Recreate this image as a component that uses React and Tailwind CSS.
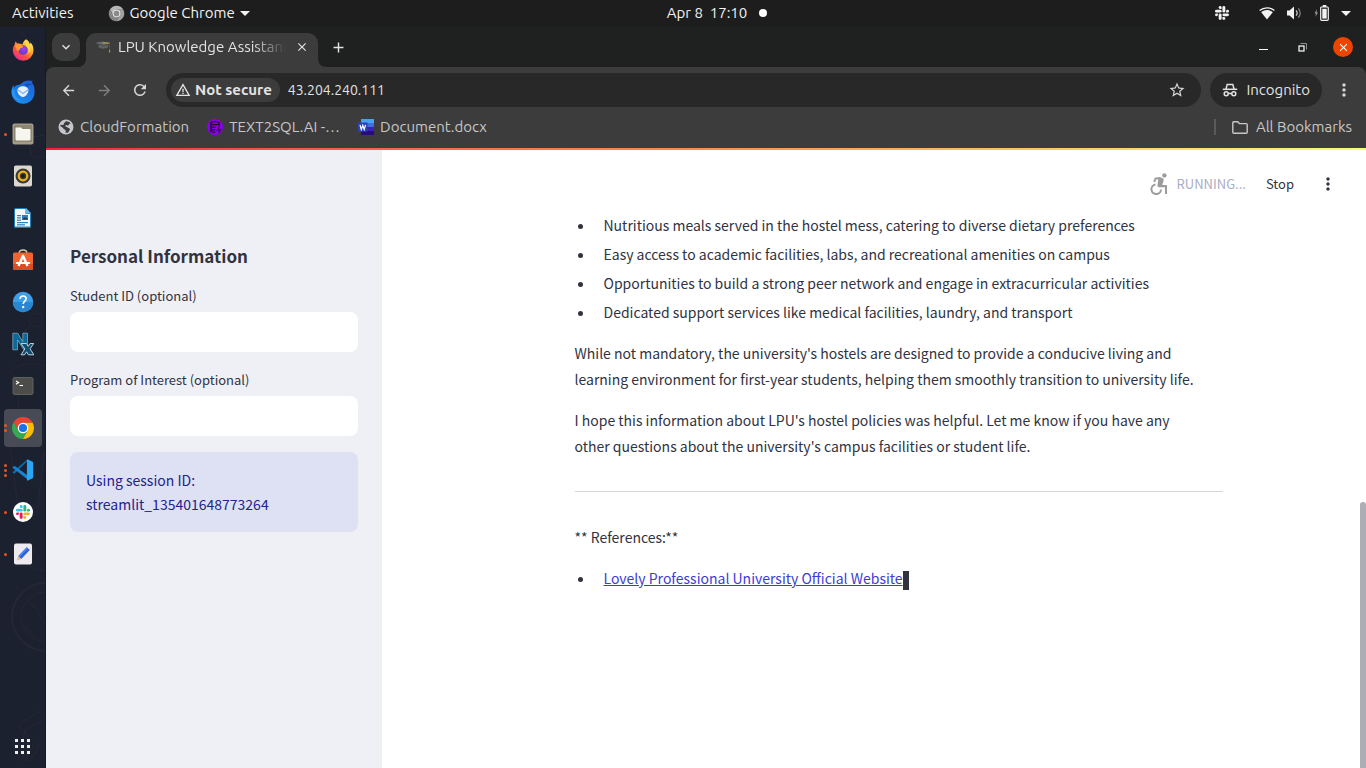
import React from "react";
import {
  MdArrowBack,
  MdArrowForward,
  MdRefresh,
  MdStarBorder,
  MdMoreVert,
  MdClose,
  MdAdd,
  MdKeyboardArrowDown,
  MdWarningAmber,
} from "react-icons/md";

const UI = "font-['Ubuntu','Noto_Sans',sans-serif]";
const BODY = "font-['Source_Sans_Pro','Noto_Sans_CJK_SC',sans-serif]";

/* ---------- icons ---------- */

function ChromeIcon({ size, gray }) {
  const [r, y, g, b, ring] = gray
    ? ["#b5b5b5", "#a0a0a0", "#878787", "#8a8a8a", "#f5f5f5"]
    : ["#ea4335", "#fbbc05", "#34a853", "#1a73e8", "#ffffff"];
  return (
    <svg width={size} height={size} viewBox="0 0 48 48" aria-hidden="true">
      <path fill={r} d="M24 13.5H43.33A22 22 0 0 0 5.25 12.51L14.91 29.25L24 24Z" />
      <path fill={y} d="M33.09 29.25L23.43 45.99A22 22 0 0 0 43.33 13.5H24V24Z" />
      <path fill={g} d="M14.91 29.25L5.25 12.51A22 22 0 0 0 23.43 45.99L33.09 29.25L24 24Z" />
      <circle cx="24" cy="24" r="10.6" fill={ring} />
      <circle cx="24" cy="24" r="8.2" fill={b} />
    </svg>
  );
}

function SlackMark({ size, colors }) {
  const [b, g, y, r] = colors;
  return (
    <svg width={size} height={size} viewBox="0 0 24 24" aria-hidden="true">
      <g fill={b}>
        <rect x="0" y="6.3" width="11.3" height="5" rx="2.5" />
        <path d="M8.8 0a2.5 2.5 0 0 1 2.5 2.5V5H8.8a2.5 2.5 0 0 1 0-5z" />
      </g>
      <g fill={g}>
        <rect x="12.7" y="0" width="5" height="11.3" rx="2.5" />
        <path d="M24 8.8a2.5 2.5 0 0 1-2.5 2.5H19V8.8a2.5 2.5 0 0 1 5 0z" />
      </g>
      <g fill={y}>
        <rect x="12.7" y="12.7" width="11.3" height="5" rx="2.5" />
        <path d="M15.2 24a2.5 2.5 0 0 1-2.5-2.5V19h2.5a2.5 2.5 0 0 1 0 5z" />
      </g>
      <g fill={r}>
        <rect x="6.3" y="12.7" width="5" height="11.3" rx="2.5" />
        <path d="M0 15.2a2.5 2.5 0 0 1 2.5-2.5H5v2.5a2.5 2.5 0 0 1-5 0z" />
      </g>
    </svg>
  );
}

function FirefoxIcon() {
  return (
    <svg width="22" height="22" viewBox="0 0 22 22" aria-hidden="true">
      <defs>
        <linearGradient id="ffBody" x1="0.85" y1="0.1" x2="0.2" y2="0.95">
          <stop offset="0" stopColor="#fff44f" />
          <stop offset="0.35" stopColor="#ffa436" />
          <stop offset="0.65" stopColor="#ff5634" />
          <stop offset="1" stopColor="#f0259a" />
        </linearGradient>
        <radialGradient id="ffCore" cx="0.6" cy="0.3" r="0.8">
          <stop offset="0" stopColor="#a63df0" />
          <stop offset="1" stopColor="#5b3bc4" />
        </radialGradient>
      </defs>
      <path
        fill="url(#ffBody)"
        d="M14 .3c2 1.2 3.3 2.9 3.700 4.600.6-.2.9-1 .9-1.500 2 2 2.900 4.900 2.900 8A10.300 10.300 0 0 1 .8 11.500C.8 8.900 1.700 7 2.600 5.500c.1-1.300.6-2.400 1.400-3.300.1 1 .5 1.700 1 2.200 1-.2 2.100 0 3 .4 1 .5 1.700.4 2.600.4C10.900 3.200 12.300 1.500 14 .3z"
      />
      <circle cx="11" cy="11" r="4.800" fill="url(#ffCore)" />
      <path
        fill="#ff9a2e"
        d="M3.300 6.300c1.700-1 3.800-.9 5.300-.2 1 .5 1.900.7 2.400 1.100.2.900-1 1.600-2.100 1.800-.8.2-1 .9-.8 1.500-.9 0-1.700.8-1.700 2-1.700-1.100-2.900-3.500-3.100-6.200z"
      />
      <path fill="#ffd83f" d="M14.300 1.500c2.200 2.400 4.800 5 4.300 9.200-.2 1.700-1.200 3-2.300 3.900.6-2.600.2-4.800-1.200-6.300-1.300-1.200-2.200-3.600-.8-6.800z" />
    </svg>
  );
}

function ThunderbirdIcon() {
  return (
    <svg width="24" height="24" viewBox="0 0 22 22" aria-hidden="true">
      <defs>
        <linearGradient id="tb" x1="0.8" y1="0" x2="0.2" y2="1">
          <stop offset="0" stopColor="#1f5fd6" />
          <stop offset="0.5" stopColor="#1a78e0" />
          <stop offset="1" stopColor="#1b8df0" />
        </linearGradient>
      </defs>
      <path
        fill="url(#tb)"
        d="M10 3C12 .6 16 0 20 1c-.5.400-.8.800-.9 1.400 2 2.200 2.700 5 2.500 8.600A10.500 10.500 0 0 1 .6 11.500C.3 9 .8 6.500 2.300 4.500L2.700 7C3.800 5 6 4 8 4.300z"
      />
      <path fill="#2a95f5" d="M1 8c.6 1 1.800 1.500 2.600 1.300C2.800 13 5 17.500 10 18.500 5 20 .6 16 .6 11.500z" />
      <path fill="#1450b4" d="M12 4c3-1.500 6-1 7.500.5C17.500 4.400 15.500 5 14.500 6z" />
      <path fill="#e6f1fd" d="M6 8.500C7 6.500 9 5.500 11 5.700c2.200 0 4 1 4.900 2.800.6 2.500-1.800 6.900-4.900 7-3.200-.1-5.700-4-5-7z" />
      <path d="M6.300 9L11 12.300 15.700 9" fill="none" stroke="#7db0ee" strokeWidth="1.100" />
    </svg>
  );
}

function FilesIcon() {
  return (
    <svg width="22" height="22" viewBox="0 0 22 22" aria-hidden="true">
      <rect x="0.500" y="0.500" width="21" height="21" rx="2" fill="#a39c88" />
      <rect x="2" y="2" width="18" height="17" rx="1" fill="#8b8572" />
      <path fill="#f7f5f0" d="M3.500 5.500a1 1 0 0 1 1-1H9l1.500 1.500h7a1 1 0 0 1 1 1V16a1.500 1.500 0 0 1-1.500 1.500H5A1.500 1.500 0 0 1 3.500 16z" />
    </svg>
  );
}

function RhythmboxIcon() {
  return (
    <svg width="22" height="22" viewBox="0 0 22 22" aria-hidden="true">
      <rect x="2" y="0.500" width="18" height="21" rx="1.800" fill="#dcd8d0" />
      <circle cx="11" cy="11" r="7.500" fill="#3a3833" />
      <circle cx="11" cy="11" r="4.300" fill="none" stroke="#e8b21e" strokeWidth="2.200" />
      <circle cx="11" cy="11" r="1.700" fill="#1d1c1a" />
    </svg>
  );
}

function WriterIcon() {
  return (
    <svg width="22" height="22" viewBox="0 0 22 22" aria-hidden="true">
      <path fill="#1d7fb8" d="M3.500 1H14l5 5v13.500a1.500 1.500 0 0 1-1.500 1.500h-14A1.500 1.500 0 0 1 2 19.500v-17A1.500 1.500 0 0 1 3.500 1z" />
      <path fill="#f4f8fb" d="M4 2h9.500v5H18v12.500H4A1 1 0 0 1 3 19V3a1 1 0 0 1 1-1z" />
      <path fill="#6bb5e0" d="M14 1l5 5.500h-5z" />
      <g fill="#2a83bb">
        <rect x="5" y="8" width="4" height="1.200" />
        <rect x="5" y="10.300" width="4" height="1.200" />
        <rect x="5" y="12.600" width="4" height="1.200" />
        <rect x="10" y="8" width="6" height="5" />
        <rect x="5" y="15" width="11" height="1.200" />
        <rect x="5" y="17.200" width="8" height="1.200" />
      </g>
      <path fill="#15384f" d="M10.500 12.500l2-2.500 1.200 1.200 1-.800 1 2z" />
    </svg>
  );
}

function SoftwareIcon() {
  return (
    <svg width="22" height="22" viewBox="0 0 22 22" aria-hidden="true">
      <path d="M7 4.500C7 1.800 8.500 1 11 1s4 .8 4 3.500" fill="none" stroke="#d8cfa0" strokeWidth="1.300" />
      <rect x="1" y="3.500" width="20" height="17.500" rx="1.500" fill="#f0652f" />
      <path fill="#d94f1d" d="M1 15h20v4.500a1.500 1.500 0 0 1-1.500 1.500h-17A1.500 1.500 0 0 1 1 19.500z" />
      <path d="M6.500 17L11 6.800 15.500 17" fill="none" stroke="#fff" strokeWidth="2.400" strokeLinejoin="round" />
      <path d="M4.800 14h12.400" stroke="#fff" strokeWidth="2" strokeLinecap="round" />
    </svg>
  );
}

function HelpIcon() {
  return (
    <svg width="22" height="22" viewBox="0 0 22 22" aria-hidden="true">
      <circle cx="11" cy="11" r="10.200" fill="#3f9fe6" />
      <path fill="#2b86d1" d="M.8 11a10.200 10.200 0 0 0 20.400 0z" />
      <path d="M8 7.800C8.200 5.900 9.500 5 11.100 5c1.800 0 3 1.100 3 2.700 0 2.200-2.900 2.700-2.900 5.300" fill="none" stroke="#fff" strokeWidth="1.600" />
      <circle cx="11.200" cy="16" r="1.200" fill="#fff" />
    </svg>
  );
}

function NxIcon() {
  return (
    <svg width="22" height="24" viewBox="0 0 22 24" fill="none" aria-hidden="true">
      <path d="M.8 1.200h5l5 8.500V1.200h4.700v16.600h-3.700L5.500 8v9.800H.8z" fill="#0a6a99" stroke="#9fc3d8" strokeWidth="0.600" />
      <path d="M9 11.500h5.500l1.700 2.800 1.800-2.800h3.700l-3.600 5.300 3.800 6h-5.600l-1.700-3-2 3H9l3.800-5.800z" fill="#134d70" stroke="#c9dde8" strokeWidth="0.900" />
    </svg>
  );
}

function TerminalIcon() {
  return (
    <svg width="22" height="18" viewBox="0 0 22 18" aria-hidden="true">
      <rect x="1" y="0.500" width="20" height="17" rx="1.500" fill="#4c4c4a" stroke="#6b6b69" strokeWidth="0.800" />
      <path d="M4 4l2.600 1.600L4 7.200" fill="none" stroke="#fff" strokeWidth="1.200" />
      <path d="M7.500 8.500H11" stroke="#fff" strokeWidth="1.100" />
    </svg>
  );
}

function CodeIcon() {
  return (
    <svg width="22" height="22" viewBox="0 0 24 24" aria-hidden="true">
      <path fill="#0a6fb8" d="M17.200 1.500L4 14.600l-1.600 1.500-1.300-.7a.7.700 0 0 1-.1-1.100L16 1z" />
      <path fill="#1583cf" d="M1 8.700l1.400-1a.8.800 0 0 1 1 .1L18 18.500v4.800L1 9.800a.8.800 0 0 1 0-1.100z" />
      <path fill="#2aa5f3" d="M17.300.5L22.500 3c.4.200.6.500.6 1v16c0 .5-.2.800-.6 1l-5.200 2.500c-.6.300-1 0-1-.7V1.200c0-.7.400-1 1-.7z" />
    </svg>
  );
}

function SlackAppIcon() {
  return (
    <span className="flex size-5 items-center justify-center rounded-full bg-white">
      <SlackMark size={14} colors={["#36c5f0", "#2eb67d", "#ecb22e", "#e01e5a"]} />
    </span>
  );
}

function TextEditorIcon() {
  return (
    <svg width="22" height="22" viewBox="0 0 22 22" aria-hidden="true">
      <rect x="2" y="0.500" width="18" height="21" rx="2" fill="#eeeaf0" />
      <path fill="#2d5fd8" d="M14.800 4.200l3 2.800-8.600 9-3-2.800z" />
      <path fill="#4a80f0" d="M14.800 4.200l1.300 1.200-8.600 9-1.300-1.200z" />
      <path fill="#e8b98a" d="M6.200 13.200l3 2.800-4.400 1.600z" />
    </svg>
  );
}

function IncognitoIcon() {
  return (
    <svg width="16" height="16" viewBox="0 0 16 16" fill="none" stroke="#e3e3e3" strokeWidth="1.500" aria-hidden="true">
      <path d="M4 7l1.200-4.600h5.600L12 7" />
      <path d="M.8 7.300h14.400" />
      <circle cx="4.200" cy="11.800" r="2" />
      <circle cx="11.800" cy="11.800" r="2" />
      <path d="M6.200 11.500h3.600" />
    </svg>
  );
}

function CapIcon() {
  return (
    <svg width="16" height="16" viewBox="0 0 16 16" aria-hidden="true">
      <path fill="#6a6f6d" d="M0 4L7.500 2.500l8 1.500-7 2z" />
      <path fill="#5d6261" d="M3.500 5.500l5 1.300L13 5.500v3c-2.500 1.500-7 1.500-9.500 0z" />
      <path d="M8 3.900l6.500.3" fill="none" stroke="#c0ac38" />
      <path d="M14.500 4.200v7" fill="none" stroke="#55594f" strokeWidth="0.800" />
      <rect x="14" y="11" width="1.200" height="2.500" fill="#b88a2e" />
    </svg>
  );
}

function GlobeIcon() {
  return (
    <svg width="16" height="16" viewBox="0 0 16 16" aria-hidden="true">
      <circle cx="8" cy="8" r="7.500" fill="#c3c6cb" />
      <path fill="#3c3c3c" d="M7.800 2.200c1.700-.3 3.700.6 4.800 2.300-.9.200-1.500.3-1.800 1.300-.2.900-1.300.7-1.900.4-.9-.4-1.700.3-1.300 1.200.4.600 1.600.4 2.200 1.100.7.800 1.900.5 2.100 1.600.2 1.200-1.300 2-1.500 3.400-1 .5-2.300.4-3 .1.300-.9.600-2-.1-2.700-.7-.6-2-.7-2.200-1.900L2.300 7c.1-.6.300-1.100.5-1.500.9.500 1.900 1 2.700.2.500-.6.100-1.300.7-1.800.6-.5 1.400-.7 1.600-1.700z" />
    </svg>
  );
}

function DatabaseIcon() {
  return (
    <svg width="16" height="16" viewBox="0 0 16 16" aria-hidden="true">
      <circle cx="8" cy="8" r="8" fill="#8a00e6" />
      <g fill="none" stroke="#250045" strokeWidth="1.200">
        <ellipse cx="8" cy="4.200" rx="4.200" ry="1.500" />
        <path d="M3.800 4.500v7.300c0 .8 2 1.500 4.200 1.500M12.200 4.500v3.300M3.800 7.200c.5 1 4 1.300 5.500 1M3.800 9.800c.8.900 3 1.100 4.700.9" />
        <path d="M12.300 8.500l-2 2.500h3l-1.800 2.500" />
      </g>
    </svg>
  );
}

function WordIcon() {
  return (
    <svg width="16" height="16" viewBox="0 0 16 16" aria-hidden="true">
      <rect x="3" y="0" width="13" height="4" fill="#4aa0f5" />
      <rect x="3" y="4" width="13" height="4" fill="#3f6fdc" />
      <rect x="3" y="8" width="13" height="4" fill="#3a22b8" />
      <rect x="3" y="12" width="13" height="4" fill="#2a0a80" />
      <rect x="0" y="3.500" width="9.500" height="9" fill="#2b41b8" />
      <path d="M2 5.800l1.300 4.700L4.800 6.300l1.400 4.200L7.600 5.800" fill="none" stroke="#fff" strokeWidth="1.200" />
    </svg>
  );
}

function FolderIcon() {
  return (
    <svg width="16" height="13" viewBox="0 0 16 13" fill="none" stroke="#c7c7c7" strokeWidth="1.400" aria-hidden="true">
      <path d="M.8 1.700a.9.900 0 0 1 .9-.9h4l1.700 1.800h6.900a.9.900 0 0 1 .9.900v7.800a.9.900 0 0 1-.9.900H1.700a.9.900 0 0 1-.9-.9z" />
    </svg>
  );
}

function RunnerIcon() {
  return (
    <svg width="18" height="22" viewBox="0 0 18 22" fill="none" stroke="#9c9c9c" strokeWidth="2" aria-hidden="true">
      <circle cx="14.400" cy="2.400" r="2.200" fill="#9c9c9c" stroke="none" />
      <path d="M4.200 8.800l1.300-3.300 4.500-.2" strokeLinejoin="round" />
      <path d="M8.500 4.400c2.200-.3 5.500.8 5.200 2.800L12.300 12H16a1 1 0 0 1 1 1v8h-2v-6.700H9.200a1.800 1.800 0 0 1-1.600-2.600z" fill="#9c9c9c" stroke="none" />
      <path d="M5.500 11.500a4.800 4.800 0 1 0 5.500 5" />
    </svg>
  );
}

function Caret() {
  return (
    <svg width="10" height="5" viewBox="0 0 10 5" aria-hidden="true">
      <path d="M0 0h10L5 5z" fill="#f2f2f2" />
    </svg>
  );
}

/* ---------- desktop ---------- */

function TopBar() {
  return (
    <header className={`grid h-[27px] shrink-0 grid-cols-[1fr_auto_1fr] items-center bg-[#1d1d1d] pb-px text-[15px] text-[#f2f2f2] ${UI}`}>
      <div className="flex items-center gap-[34px] pl-3">
        <button type="button">Activities</button>
        <button type="button" className="flex items-center gap-[5px]">
          <ChromeIcon size={17} gray />
          Google Chrome
          <Caret />
        </button>
      </div>
      <button type="button" className="flex items-center gap-3 pl-[68px]">
        <span className="whitespace-pre">Apr 8  17:10</span>
        <span className="size-2 rounded-full bg-white" />
      </button>
      <div className="flex items-center justify-end pr-[15px]">
        <SlackMark size={14} colors={["#f2f2f2", "#f2f2f2", "#f2f2f2", "#f2f2f2"]} />
        <svg width="16" height="13" viewBox="0 0 16 13" className="ml-[30px]" aria-hidden="true">
          <path d="M.6 3.600C4.800-.1 11.200-.1 15.400 3.600" fill="none" stroke="#f2f2f2" strokeWidth="1.300" />
          <path d="M2.200 5.200c3.500-2.900 8.100-2.900 11.600 0L8 12.500z" fill="#f2f2f2" />
        </svg>
        <svg width="15" height="14" viewBox="0 0 15 14" className="ml-3" aria-hidden="true">
          <path d="M0 4.500h2.500L7 .5v13L2.500 9.500H0z" fill="#f2f2f2" />
          <path d="M9 4.300c1.300 1.500 1.300 3.900 0 5.400" fill="none" stroke="#d0d0d0" strokeWidth="1.200" />
          <path d="M11.300 2.300c2.500 2.600 2.500 6.800 0 9.400" fill="none" stroke="#8a8a8a" strokeWidth="1.200" />
        </svg>
        <svg width="15" height="16" viewBox="0 0 15 16" className="ml-3" aria-hidden="true">
          <path d="M3 4L.5 8.500H2L1.300 12 4 7.500H2.500z" fill="#9a9a9a" />
          <rect x="6.700" y="2" width="7.600" height="13.300" rx="1" fill="none" stroke="#f2f2f2" strokeWidth="1.200" />
          <rect x="8.300" y="3.800" width="4.400" height="9.800" fill="#f2f2f2" />
          <rect x="8.700" y="0" width="3.600" height="2" fill="#f2f2f2" />
        </svg>
        <span className="ml-3">
          <Caret />
        </span>
      </div>
    </header>
  );
}

const DOCK = [
  { name: "Firefox", icon: <FirefoxIcon />, dots: 0 },
  { name: "Thunderbird", icon: <ThunderbirdIcon />, dots: 0 },
  { name: "Files", icon: <FilesIcon />, dots: 1 },
  { name: "Rhythmbox", icon: <RhythmboxIcon />, dots: 0 },
  { name: "Writer", icon: <WriterIcon />, dots: 0 },
  { name: "Software", icon: <SoftwareIcon />, dots: 0 },
  { name: "Help", icon: <HelpIcon />, dots: 0 },
  { name: "NX client", icon: <NxIcon />, dots: 0 },
  { name: "Terminal", icon: <TerminalIcon />, dots: 0 },
  { name: "Chrome", icon: <ChromeIcon size={24} />, dots: 2, active: true },
  { name: "Code", icon: <CodeIcon />, dots: 3 },
  { name: "Slack", icon: <SlackAppIcon />, dots: 1 },
  { name: "Text Editor", icon: <TextEditorIcon />, dots: 1 },
];

function Dock() {
  return (
    <nav aria-label="Dock" className="relative flex w-[46px] shrink-0 flex-col items-center overflow-hidden border-r border-[#171926] bg-[#1c2130] pt-1">
      <svg className="absolute top-0 left-0" width="46" height="741" fill="none" stroke="#242736" aria-hidden="true">
        <circle cx="46" cy="590" r="34" strokeWidth="2" />
        <circle cx="46" cy="590" r="25" />
        <path d="M28 575c8 4 12 12 17 22M24 600l10 8M18 698l22-14 6 7-24 14zM22 734c-8-12-10-18-8-22s8 10 10 22c0-16-2-24 1-30 4 8 2 20 1 30 4-12 10-22 12-16s-6 10-8 16" />
        <circle cx="36" cy="293" r="7" />
        <path d="M31 298l-8 8M28 111l16-3 4 22H32zM20 5l14 12-6 8-10-12M10 345c6-8 20-10 36-6M12 345c4 12 8 22 6 36M10 420l8 60h20l6-56M34 520l-4 20 14 4" />
      </svg>
      <ul className="relative flex flex-col gap-1">
        {DOCK.map((d) => (
          <li key={d.name} className="relative">
            <button
              type="button"
              aria-label={d.name}
              className={`flex size-[38px] items-center justify-center rounded-[4px] ${d.active ? "bg-[#484b56]" : ""}`}
            >
              {d.icon}
            </button>
            <span className="absolute inset-y-0 left-0 flex flex-col justify-center gap-[2px]">
              {Array.from({ length: d.dots }, (_, i) => (
                <span key={i} className="size-[3px] rounded-full bg-[#e95420]" />
              ))}
            </span>
          </li>
        ))}
      </ul>
      <button type="button" aria-label="Show applications" className="relative mt-auto mb-[14px] grid grid-cols-3 gap-[3px]">
        {Array.from({ length: 9 }, (_, i) => (
          <span key={i} className="size-[3px] bg-[#eeeeee]" />
        ))}
      </button>
    </nav>
  );
}

/* ---------- browser ---------- */

function TabStrip() {
  return (
    <div className="flex h-10 items-end justify-between bg-[#1f2120] pr-[13px] pl-[6px] text-[#e3e3e3]">
      <div className="flex items-end">
        <button type="button" aria-label="Search tabs" className="mr-[6px] mb-[6px] flex size-7 items-center justify-center rounded-[10px] bg-[#3c3c3c]">
          <MdKeyboardArrowDown size={16} />
        </button>
        <div className="relative flex h-[34px] w-[232px] items-center rounded-t-[10px] bg-[#3c3c3c] pb-[6px] pl-[9px]">
          <svg className="absolute bottom-0 -left-2" width="8" height="8" aria-hidden="true">
            <path d="M8 0v8H0a8 8 0 0 0 8-8z" fill="#3c3c3c" />
          </svg>
          <svg className="absolute -right-2 bottom-0" width="8" height="8" aria-hidden="true">
            <path d="M0 0v8h8a8 8 0 0 1-8-8z" fill="#3c3c3c" />
          </svg>
          <CapIcon />
          <span className="ml-[7px] w-[168px] overflow-hidden text-[15px] whitespace-nowrap [mask-image:linear-gradient(to_right,black_80%,transparent)]">
            LPU Knowledge Assistant
          </span>
          <button type="button" aria-label="Close tab" className="ml-2 flex size-4 items-center justify-center">
            <MdClose size={14} />
          </button>
        </div>
        <button type="button" aria-label="New tab" className="mb-[6px] ml-[6px] flex size-7 items-center justify-center">
          <MdAdd size={17} />
        </button>
      </div>
      <div className="flex h-full items-center gap-[30px] text-white">
        <button type="button" aria-label="Minimize" className="flex h-5 w-[9px] items-end pb-[7px]">
          <span className="h-px w-full bg-white" />
        </button>
        <button type="button" aria-label="Restore">
          <svg width="9" height="9" viewBox="0 0 9 9" fill="none" aria-hidden="true">
            <path d="M2.500.5h6v6" stroke="#8f8f8f" />
            <rect x="1" y="3" width="5" height="5" stroke="#fff" strokeWidth="1.200" />
          </svg>
        </button>
        <button type="button" aria-label="Close" className="-ml-1 flex size-5 items-center justify-center rounded-full bg-[#ef4400]">
          <MdClose size={13} />
        </button>
      </div>
    </div>
  );
}

function Toolbar() {
  return (
    <div className="flex h-[46px] items-center rounded-t-lg bg-[#3c3c3c] pr-2 pl-2 text-[#d6d6d6]">
      <div className="flex gap-2">
        <button type="button" aria-label="Back" className="flex size-7 items-center justify-center">
          <MdArrowBack size={17} />
        </button>
        <button type="button" aria-label="Forward" className="flex size-7 items-center justify-center text-[#7f7f7f]">
          <MdArrowForward size={17} />
        </button>
        <button type="button" aria-label="Reload" className="flex size-7 items-center justify-center">
          <MdRefresh size={18} />
        </button>
      </div>
      <div className="ml-3 flex h-[34px] min-w-0 flex-1 items-center rounded-full bg-[#282828] pr-[15px] pl-[5px]">
        <button type="button" className="flex h-6 items-center gap-1 rounded-full bg-[#3c3c3c] pr-2 pl-1 text-[15px] font-semibold whitespace-nowrap text-[#e3e3e3]">
          <MdWarningAmber size={16} />
          Not secure
        </button>
        <input aria-label="Address" defaultValue="43.204.240.111" className="ml-2 h-6 min-w-0 flex-1 bg-transparent text-sm text-[#e3e3e3] outline-none" />
        <button type="button" aria-label="Bookmark this tab">
          <MdStarBorder size={18} />
        </button>
      </div>
      <button type="button" className="ml-[9px] flex h-[34px] items-center gap-2 rounded-full bg-[#282828] px-3 text-[15px] text-[#e3e3e3]">
        <IncognitoIcon />
        Incognito
      </button>
      <button type="button" aria-label="Menu" className="ml-2 flex size-7 items-center justify-center">
        <MdMoreVert size={20} />
      </button>
    </div>
  );
}

function Bookmarks() {
  const link = "flex items-center gap-[6px] whitespace-nowrap";
  return (
    <nav aria-label="Bookmarks" className="flex h-[35px] items-center gap-[18px] bg-[#3c3c3c] pr-[14px] pb-[7px] pl-3 text-[15px] text-[#c7c7c7]">
      <a href="#cloudformation" className={link}>
        <GlobeIcon />
        CloudFormation
      </a>
      <a href="#text2sql" className={link}>
        <DatabaseIcon />
        TEXT2SQL.AI -…
      </a>
      <a href="#document" className={link}>
        <WordIcon />
        Document.docx
      </a>
      <button type="button" className="ml-auto flex items-center whitespace-nowrap">
        <span className="mr-4 h-4 w-[2px] bg-[#5a5a5a]" />
        <span className="flex items-center gap-2">
          <FolderIcon />
          All Bookmarks
        </span>
      </button>
    </nav>
  );
}

/* ---------- page ---------- */

function Field({ id, label }) {
  return (
    <div className="mt-4 flex flex-col gap-1">
      <label htmlFor={id} className="text-[13px] leading-6">
        {label}
      </label>
      <input id={id} type="text" className="h-10 w-full rounded-lg bg-white px-3 text-sm outline-none" />
    </div>
  );
}

function Sidebar() {
  return (
    <aside className="w-[336px] shrink-0 bg-[#eff0f6] px-6 pt-[94px]">
      <h3 className="text-[17px] leading-6 font-bold">Personal Information</h3>
      <Field id="student" label="Student ID (optional)" />
      <Field id="program" label="Program of Interest (optional)" />
      <div className="mt-4 rounded-lg bg-[#dee1f4] p-4 text-sm leading-6 text-[#23238e]">
        <p>Using session ID:</p>
        <p>streamlit_135401648773264</p>
      </div>
    </aside>
  );
}

const POINTS = [
  "Nutritious meals served in the hostel mess, catering to diverse dietary preferences",
  "Easy access to academic facilities, labs, and recreational amenities on campus",
  "Opportunities to build a strong peer network and engage in extracurricular activities",
  "Dedicated support services like medical facilities, laundry, and transport",
];

function Conversation() {
  return (
    <main className="flex min-w-0 flex-1 flex-col bg-white">
      <div className="flex items-center justify-end pt-5 pr-[21px] text-[13px]">
        <RunnerIcon />
        <span className="ml-[9px] text-[#a9adc4]">RUNNING...</span>
        <button type="button" className="ml-5 h-7">Stop</button>
        <button type="button" aria-label="More options" className="ml-6">
          <MdMoreVert size={20} />
        </button>
      </div>
      <article className="mx-auto w-full max-w-[704px] pt-[14px] pb-20 pl-14 text-sm leading-[26px]">
        <ul className="flex list-disc flex-col gap-[3px] pl-5">
          {POINTS.map((p) => (
            <li key={p} className="pl-[9px]">{p}</li>
          ))}
        </ul>
        <p className="mt-[15px] pr-5">
          While not mandatory, the university's hostels are designed to provide a conducive living and learning environment for first-year
          students, helping them smoothly transition to university life.
        </p>
        <p className="mt-[15px] pr-5">
          I hope this information about LPU's hostel policies was helpful. Let me know if you have any other questions about the university's
          campus facilities or student life.
        </p>
        <hr className="my-8 border-[#d6d6da]" />
        <p>** References:**</p>
        <ul className="mt-[15px] list-disc pl-5">
          <li className="pl-[9px]">
            <a href="#lpu" className="text-[#3d3dd6] underline">Lovely Professional University Official Website</a>
            <span className="inline-block h-[19px] w-[6px] bg-[#31333f] align-middle" />
          </li>
        </ul>
      </article>
    </main>
  );
}

export default function App() {
  return (
    <div className="flex min-h-screen flex-col bg-[#1c2130]">
      <TopBar />
      <div className="flex flex-1">
        <Dock />
        <div className="flex min-w-0 flex-1 flex-col bg-[#1f2120]">
          <div className={UI}>
            <TabStrip />
            <Toolbar />
            <Bookmarks />
          </div>
          <div className="h-[2px] bg-linear-to-r from-[#ff1a3c] via-[#ff8c4a] to-[#f5ff6a]" />
          <div className={`flex flex-1 text-[#31333f] ${BODY}`}>
            <Sidebar />
            <Conversation />
            <div className="flex w-[7px] flex-col bg-white pl-px" aria-hidden="true">
              <div className="mt-auto h-[43%] rounded-t-full bg-[#acadb5]" />
            </div>
          </div>
        </div>
      </div>
    </div>
  );
}
